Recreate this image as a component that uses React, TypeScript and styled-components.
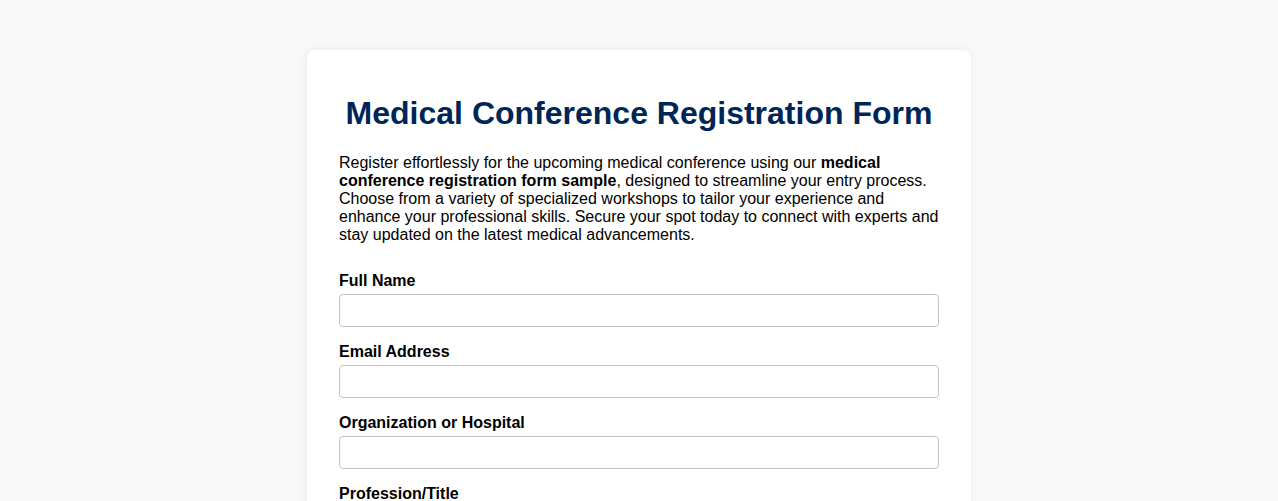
import React from "react";
import styled, { createGlobalStyle } from "styled-components";

const GlobalStyle = createGlobalStyle`
	html, body {
		margin: 0;
		padding: 0;
		background: #f8f8f8;
		font-family: "Liberation Sans", Arial, sans-serif;
		color: #000;
	}
`;

const fields = ["Full Name", "Email Address", "Organization or Hospital", "Profession/Title"];

const App = () => {
	return (
		<Page>
			<GlobalStyle />
			<FormCard>
				<Title>Medical Conference Registration Form</Title>
				<Intro>
					Register effortlessly for the upcoming medical conference using our{" "}
					<strong>medical conference registration form sample</strong>, designed to streamline your entry
					process. Choose from a variety of specialized workshops to tailor your experience and enhance your
					professional skills. Secure your spot today to connect with experts and stay updated on the latest
					medical advancements.
				</Intro>
				{fields.map((label) => (
					<Field key={label}>
						<Label>{label}</Label>
						<Input type="text" />
					</Field>
				))}
			</FormCard>
		</Page>
	);
};

export default App;

const Page = styled.div`
	display: flex;
	justify-content: center;
	padding-top: 50px;
	padding-bottom: 40px;
	min-height: 100vh;
	box-sizing: border-box;
`;

const FormCard = styled.form`
	width: 664px;
	box-sizing: border-box;
	padding: 24px 32px 32px;
	background: #ffffff;
	border-radius: 8px;
	box-shadow: 0 0 10px rgba(0, 0, 0, 0.06);
`;

const Title = styled.h1`
	margin: 21px 0 22px;
	text-align: center;
	font-size: 32px;
	font-weight: bold;
	color: #002657;
	line-height: 37px;
`;

const Intro = styled.p`
	margin: 0 0 28px;
	font-size: 16px;
	line-height: 18px;
	strong {
		font-weight: bold;
	}
`;

const Field = styled.div`
	display: flex;
	flex-direction: column;
	margin-bottom: 16px;
`;

const Label = styled.label`
	font-size: 16px;
	font-weight: bold;
	line-height: 18px;
	margin-bottom: 4px;
`;

const Input = styled.input`
	width: 100%;
	height: 33px;
	box-sizing: border-box;
	border: 1px solid #c4c4c4;
	border-radius: 4px;
	padding: 6px 8px;
	font-size: 16px;
	font-family: inherit;
	background: #fff;
`;
